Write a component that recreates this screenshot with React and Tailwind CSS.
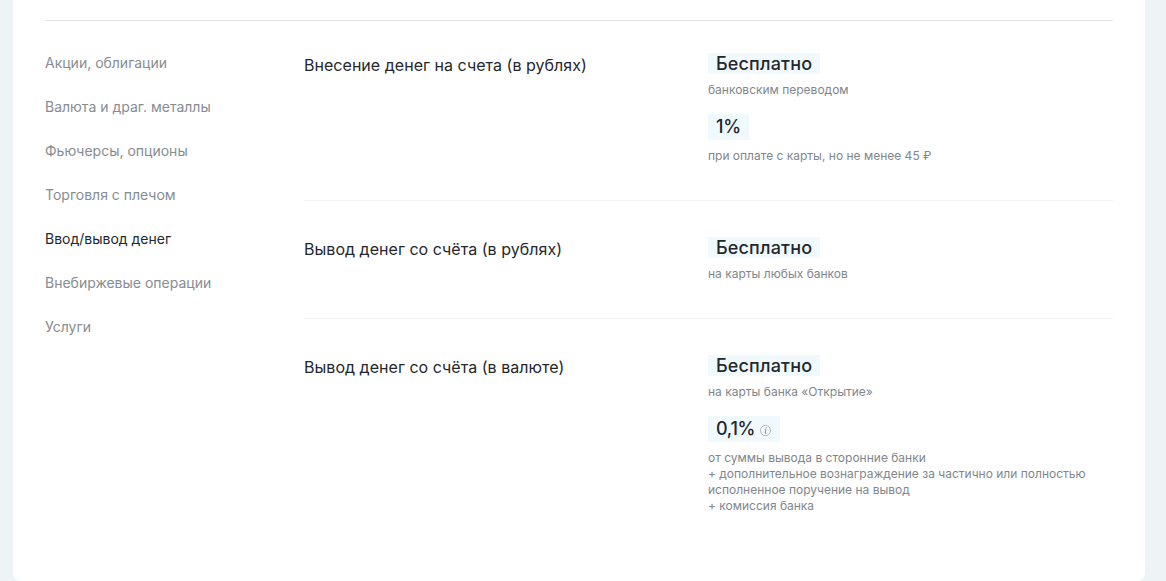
const categories = [
  'Акции, облигации',
  'Валюта и драг. металлы',
  'Фьючерсы, опционы',
  'Торговля с плечом',
  'Ввод/вывод денег',
  'Внебиржевые операции',
  'Услуги',
]

function InfoIcon() {
  return (
    <svg width="12" height="12" viewBox="0 0 12 12" fill="none" stroke="#8b9499" className="mt-[3px]">
      <circle cx="5.5" cy="5.5" r="5.1" strokeWidth="0.6" />
      <path d="M4.6 4.6h1.3L5.1 8.1h1.1" strokeWidth="1" />
      <circle cx="6.1" cy="2.9" r="0.3" strokeWidth="0.7" />
    </svg>
  )
}

function Rate({ value, tall, info, children }) {
  return (
    <div>
      <div className={`flex w-fit items-center gap-[5px] bg-[#f0f9fe] px-2 text-lg font-medium text-[#24272c] ${tall ? 'h-[26px] tracking-[-0.3px]' : 'h-[21px] tracking-[0.17px]'}`}>
        {value}
        {info && <InfoIcon />}
      </div>
      <div className="mt-2 text-xs text-[#80878b]">{children}</div>
    </div>
  )
}

function Row({ title, className, children }) {
  return (
    <div className={`flex ${className}`}>
      <h3 className="mt-0.5 w-[404px] shrink-0 text-base leading-5 tracking-[0.03px] text-[#24272c]">{title}</h3>
      <div className="flex flex-col gap-4">{children}</div>
    </div>
  )
}

export default function App() {
  return (
    <div className="h-[581px] overflow-hidden bg-[#eef3f6] pr-[21px] pl-[13px] font-['Inter',sans-serif]">
      <main className="h-full rounded-b-lg bg-white px-8 pt-5">
        <div className="flex border-t border-[#e1e5e6] pt-8">
          <nav className="w-[259px] shrink-0">
            {categories.map((name) => (
              <a key={name} className={`mb-6 block text-sm leading-5 ${name === 'Ввод/вывод денег' ? 'text-[#24272c]' : 'text-[#868d91]'}`}>
                {name}
              </a>
            ))}
          </nav>
          <section className="w-[809px]">
            <Row title="Внесение денег на счета (в рублях)" className="h-[147px]">
              <Rate value="Бесплатно">банковским переводом</Rate>
              <Rate value="1%" tall>при оплате с карты, но не менее 45 ₽</Rate>
            </Row>
            <Row title="Вывод денег со счёта (в рублях)" className="h-[118px] border-t border-[#f0f2f3] pt-9">
              <Rate value="Бесплатно">на карты любых банков</Rate>
            </Row>
            <Row title="Вывод денег со счёта (в валюте)" className="border-t border-[#f0f2f3] pt-9">
              <Rate value="Бесплатно">на карты банка «Открытие»</Rate>
              <Rate value="0,1%" tall info>
                от суммы вывода в сторонние банки<br />
                + дополнительное вознаграждение за частично или полностью<br />
                исполненное поручение на вывод<br />
                + комиссия банка
              </Rate>
            </Row>
          </section>
        </div>
      </main>
    </div>
  )
}
